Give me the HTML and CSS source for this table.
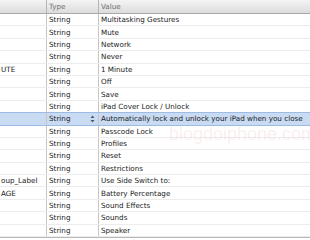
FILE: index.html
```html
<!DOCTYPE html>
<html lang="en">

<head>
    <meta charset="UTF-8">
    <title>Localizable.strings</title>
    <link rel="stylesheet" href="styles.css">
</head>

<body>
    <div class="strings-table">
        <!-- column headers -->
        <div class="row header">
            <div class="cell key"></div>
            <div class="cell type">Type</div>
            <div class="cell value">Value</div>
        </div>

        <div class="row"><div class="cell key"></div><div class="cell type">String</div><div class="cell value">Multitasking Gestures</div></div>
        <div class="row"><div class="cell key"></div><div class="cell type">String</div><div class="cell value">Mute</div></div>
        <div class="row"><div class="cell key"></div><div class="cell type">String</div><div class="cell value">Network</div></div>
        <div class="row"><div class="cell key"></div><div class="cell type">String</div><div class="cell value">Never</div></div>
        <div class="row"><div class="cell key">UTE</div><div class="cell type">String</div><div class="cell value">1 Minute</div></div>
        <div class="row"><div class="cell key"></div><div class="cell type">String</div><div class="cell value">Off</div></div>
        <div class="row"><div class="cell key"></div><div class="cell type">String</div><div class="cell value">Save</div></div>
        <div class="row"><div class="cell key"></div><div class="cell type">String</div><div class="cell value">iPad Cover Lock / Unlock</div></div>
        <div class="row selected">
            <div class="cell key"></div>
            <div class="cell type">String
                <svg class="stepper" width="5" height="8" viewBox="0 0 5 8">
                    <path d="M2.5 0.5 L4.5 3 L0.5 3 Z M0.5 5 L4.5 5 L2.5 7.5 Z" fill="#4a5a70"/>
                </svg>
            </div>
            <div class="cell value">Automatically lock and unlock your iPad when you close</div>
        </div>
        <div class="row"><div class="cell key"></div><div class="cell type">String</div><div class="cell value">Passcode Lock</div></div>
        <div class="row"><div class="cell key"></div><div class="cell type">String</div><div class="cell value">Profiles</div></div>
        <div class="row"><div class="cell key"></div><div class="cell type">String</div><div class="cell value">Reset</div></div>
        <div class="row"><div class="cell key"></div><div class="cell type">String</div><div class="cell value">Restrictions</div></div>
        <div class="row"><div class="cell key">oup_Label</div><div class="cell type">String</div><div class="cell value">Use Side Switch to:</div></div>
        <div class="row"><div class="cell key">AGE</div><div class="cell type">String</div><div class="cell value">Battery Percentage</div></div>
        <div class="row"><div class="cell key"></div><div class="cell type">String</div><div class="cell value">Sound Effects</div></div>
        <div class="row"><div class="cell key"></div><div class="cell type">String</div><div class="cell value">Sounds</div></div>
        <div class="row"><div class="cell key"></div><div class="cell type">String</div><div class="cell value">Speaker</div></div>

        <div class="watermark">blogdoiphone.com</div>
    </div>
</body>

</html>
```

FILE: styles.css
```css
/* 基本样式 */
body {
    margin: 0;
    background-color: #fff;
    font-family: "DejaVu Sans", sans-serif;
    font-size: 7.2px;
    color: #1a1a1a;
    overflow: hidden;
}

.strings-table {
    position: relative;
    width: 310px;
    height: 238px;
    overflow: hidden;
    border-bottom: 1px solid #b8b8b8;
    box-sizing: border-box;
}

.row {
    display: grid;
    grid-template-columns: 47px 52px 1fr;
    height: 12.4px;
    border-bottom: 1px solid #ececec;
    box-sizing: border-box;
}

.cell {
    display: flex;
    align-items: center;
    padding-left: 2px;
    border-right: 1px solid #c6c6c6;
    white-space: nowrap;
    overflow: hidden;
}

.cell.value {
    border-right: none;
}

.cell.key {
    padding-left: 1px;
}

/* 表头 */
.header {
    height: 14px;
    background: linear-gradient(#f4f4f4, #dcdcdc);
    border-bottom: 1px solid #a9a9a9;
    color: #6e6e6e;
}

.header .cell {
    border-right-color: #b5b5b5;
}

/* 选中行 */
.selected {
    background-color: #c8dbf3;
    border-top: 1px solid #9dbbe3;
    border-bottom: 1px solid #9dbbe3;
    margin-top: -1px;
    height: 13.4px;
}

.selected .cell.type {
    justify-content: space-between;
    padding-right: 3px;
}

.stepper {
    display: block;
}

/* 水印 */
.watermark {
    position: absolute;
    left: 169px;
    top: 124px;
    font-family: "Liberation Sans", sans-serif;
    font-size: 18px;
    color: rgba(215, 120, 120, 0.13);
    white-space: nowrap;
    pointer-events: none;
}
```
